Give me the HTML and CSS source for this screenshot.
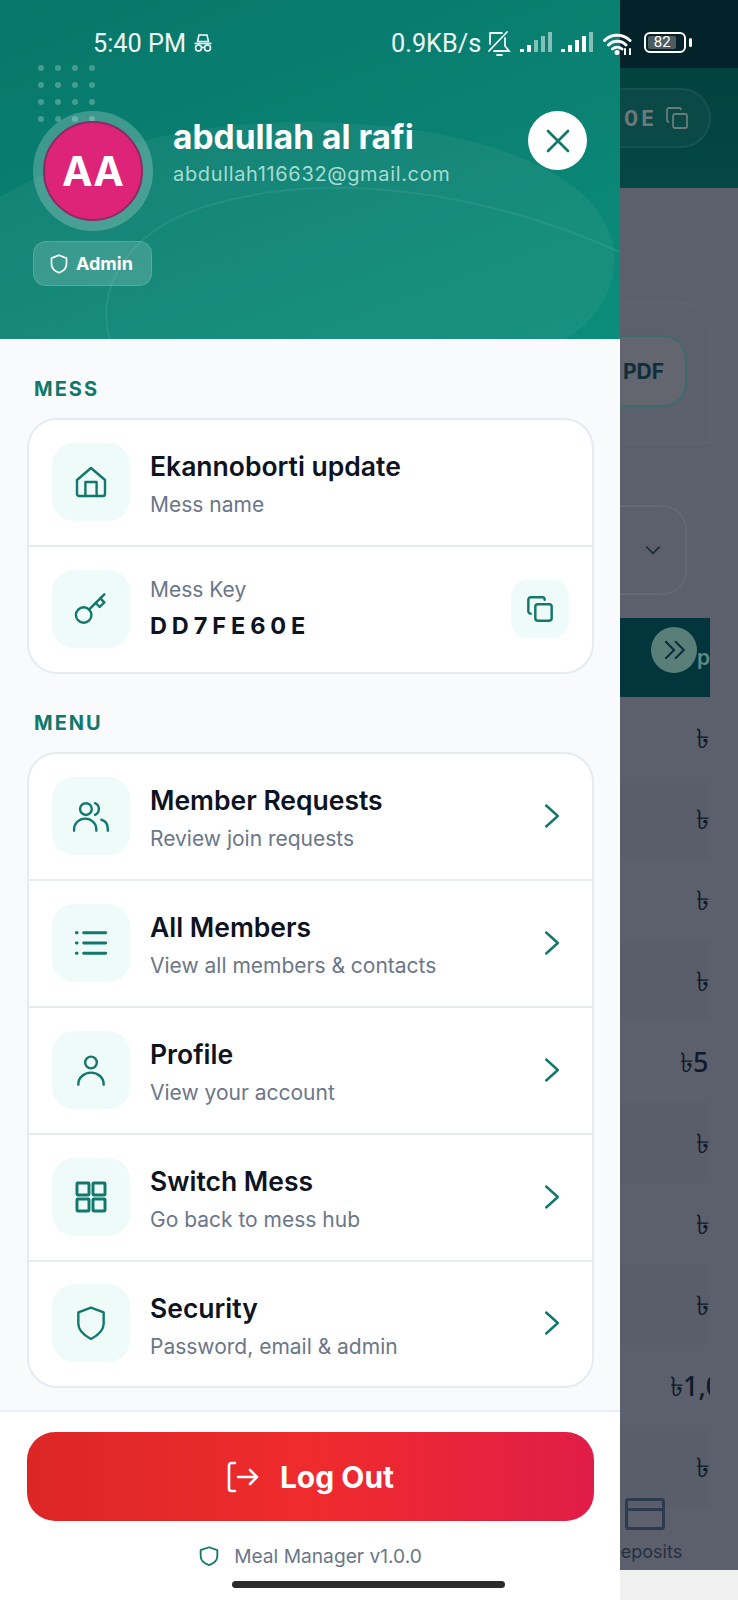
FILE: index.html
```html
<!DOCTYPE html>
<html>
  <head>
    <title>Meal Manager</title>
    <link rel="stylesheet" href="styles.css">
  </head>
  <body>
    <div class="screen">
      <!-- Drawer -->
      <aside class="drawer">
        <header class="drawer-head">
          <svg class="head-art" viewBox="0 0 620 339" width="620" height="339">
            <path d="M0 197C60 160 170 122 300 122C450 122 590 160 612 240C622 280 600 320 565 339H0Z" fill="#fff" fill-opacity=".05"/>
            <path d="M110 339C95 290 125 230 210 205C330 170 480 190 620 252" fill="none" stroke="#fff" stroke-opacity=".07" stroke-width="2"/>
            <g fill="#fff" fill-opacity=".25">
              <circle cx="41" cy="68" r="3"/><circle cx="58" cy="68" r="3"/><circle cx="75" cy="68" r="3"/><circle cx="92" cy="68" r="3"/>
              <circle cx="41" cy="85" r="3"/><circle cx="58" cy="85" r="3"/><circle cx="75" cy="85" r="3"/><circle cx="92" cy="85" r="3"/>
              <circle cx="41" cy="102" r="3"/><circle cx="58" cy="102" r="3"/><circle cx="75" cy="102" r="3"/><circle cx="92" cy="102" r="3"/>
              <circle cx="41" cy="119" r="3"/><circle cx="58" cy="119" r="3"/><circle cx="75" cy="119" r="3"/><circle cx="92" cy="119" r="3"/>
            </g>
          </svg>
          <div class="head-row">
            <div class="avatar-ring"><div class="avatar">AA</div></div>
            <div class="head-text">
              <div class="user-name">abdullah al rafi</div>
              <div class="user-mail">abdullah116632@gmail.com</div>
            </div>
            <button class="close-btn">
              <svg viewBox="0 0 24 24" width="32" height="32"><path d="M4.500 4.500l15 15M19.500 4.500l-15 15"/></svg>
            </button>
          </div>
          <div class="role-badge">
            <svg viewBox="0 0 24 24" width="20" height="22"><path d="M12 1.500l9 3.500v7c0 5-3.800 8.500-9 10.500c-5.200-2-9-5.500-9-10.500V5z"/></svg>
            Admin
          </div>
        </header>

        <main class="drawer-body">
          <div class="section-label">MESS</div>
          <section class="card">
            <div class="row">
              <div class="icon-box">
                <svg class="ico" viewBox="0 0 24 24"><path d="M1.500 10.500L12 1.500l10.500 9V21a1.500 1.500 0 0 1-1.500 1.500H3A1.500 1.500 0 0 1 1.500 21z"/><path d="M7.800 22.500V12h8.400v10.500"/></svg>
              </div>
              <div class="row-text">
                <div class="row-title">Ekannoborti update</div>
                <div class="row-sub">Mess name</div>
              </div>
            </div>
            <div class="row">
              <div class="icon-box">
                <svg class="ico" viewBox="0 0 24 24"><circle cx="6.500" cy="16.500" r="5.800"/><path d="M10.700 12.300L22 1"/><path d="M15.500 7.500l3 3 3.500-3.500-3-3"/></svg>
              </div>
              <div class="row-text key-text">
                <div class="row-sub">Mess Key</div>
                <div class="key-value">DD7FE60E</div>
              </div>
              <div class="copy-box">
                <svg class="ico ico-sm" viewBox="0 0 24 24"><rect x="8" y="8" width="14" height="14" rx="2"/><path d="M4 16a2 2 0 0 1-2-2V4a2 2 0 0 1 2-2h10a2 2 0 0 1 2 2"/></svg>
              </div>
            </div>
          </section>

          <div class="section-label menu-label">MENU</div>
          <section class="card menu-card">
            <div class="row">
              <div class="icon-box">
                <svg class="ico" viewBox="0 0 24 24"><circle cx="8.200" cy="6.800" r="4.400"/><path d="M15 2.400a4.800 4.800 0 0 1 0 8.800"/><path d="M-.7 23v-1a8.300 8 0 0 1 16.700 0v1"/><path d="M19.800 14.800c3 .8 4.800 3.500 4.800 7V23"/></svg>
              </div>
              <div class="row-text">
                <div class="row-title">Member Requests</div>
                <div class="row-sub">Review join requests</div>
              </div>
              <svg class="chev" viewBox="0 0 24 24"><path d="M7 3l10 9-10 9"/></svg>
            </div>
            <div class="row">
              <div class="icon-box">
                <svg class="ico" viewBox="0 0 24 24"><path class="thick" d="M6.500 4.300H23M6.500 12H23M6.500 19.700H23M1 4.300h.6M1 12h.6M1 19.700h.6"/></svg>
              </div>
              <div class="row-text">
                <div class="row-title">All Members</div>
                <div class="row-sub">View all members &amp; contacts</div>
              </div>
              <svg class="chev" viewBox="0 0 24 24"><path d="M7 3l10 9-10 9"/></svg>
            </div>
            <div class="row">
              <div class="icon-box">
                <svg class="ico" viewBox="0 0 24 24"><circle cx="12" cy="6.400" r="4.400"/><path d="M2.500 23v-.5a9.500 8.500 0 0 1 19 0v.5"/></svg>
              </div>
              <div class="row-text">
                <div class="row-title">Profile</div>
                <div class="row-sub">View your account</div>
              </div>
              <svg class="chev" viewBox="0 0 24 24"><path d="M7 3l10 9-10 9"/></svg>
            </div>
            <div class="row">
              <div class="icon-box">
                <svg class="ico" viewBox="0 0 24 24"><g class="thick"><rect x="1.500" y="1.500" width="9" height="9" rx=".5"/><rect x="13.500" y="1.500" width="9" height="9" rx=".5"/><rect x="1.500" y="13.500" width="9" height="9" rx=".5"/><rect x="13.500" y="13.500" width="9" height="9" rx=".5"/></g></svg>
              </div>
              <div class="row-text">
                <div class="row-title">Switch Mess</div>
                <div class="row-sub">Go back to mess hub</div>
              </div>
              <svg class="chev" viewBox="0 0 24 24"><path d="M7 3l10 9-10 9"/></svg>
            </div>
            <div class="row">
              <div class="icon-box">
                <svg class="ico" viewBox="0 0 24 24"><path d="M12 .5l9.500 3.500v8.500c0 5-4 8.500-9.500 11.500c-5.500-3-9.500-6.500-9.500-11.500V4z"/></svg>
              </div>
              <div class="row-text">
                <div class="row-title">Security</div>
                <div class="row-sub">Password, email &amp; admin</div>
              </div>
              <svg class="chev" viewBox="0 0 24 24"><path d="M7 3l10 9-10 9"/></svg>
            </div>
          </section>
        </main>

        <footer class="drawer-foot">
          <button class="logout-btn">
            <svg viewBox="0 0 32 32" width="32" height="32"><path d="M8 2H4.500A2.500 2.500 0 0 0 2 4.500v23A2.500 2.500 0 0 0 4.500 30H8"/><path d="M11 16h19M23 9l7 7-7 7"/></svg>
            <span>Log Out</span>
          </button>
          <div class="version">
            <svg viewBox="0 0 24 24" width="20" height="24"><path d="M12 1.500l10 3.500v7c0 5.500-4.500 9-10 11c-5.500-2-10-5.500-10-11V5z"/></svg>
            Meal Manager v1.0.0
          </div>
        </footer>
      </aside>

      <!-- Page dimmed behind the drawer -->
      <div class="backdrop">
        <div class="bd-status"></div>
        <div class="bd-appbar">
          <div class="bd-pill">
            <span>0E</span>
            <svg viewBox="0 0 24 24" width="24" height="24"><rect x="8" y="8" width="14" height="14" rx="2"/><path d="M4 16a2 2 0 0 1-2-2V4a2 2 0 0 1 2-2h10a2 2 0 0 1 2 2"/></svg>
          </div>
        </div>
        <div class="bd-card">
          <div class="bd-pdf">PDF</div>
        </div>
        <div class="bd-select">
          <svg viewBox="0 0 24 24" width="20" height="20"><path d="M4 8l8 8 8-8"/></svg>
        </div>
        <div class="bd-table">
          <div class="bd-thead">
            <div class="bd-skip">
              <svg viewBox="0 0 24 24" width="26" height="26"><path d="M4 4l8 8-8 8M13 4l8 8-8 8"/></svg>
            </div>
            <span class="bd-th">p</span>
          </div>
          <div class="bd-tr">৳</div>
          <div class="bd-tr alt">৳</div>
          <div class="bd-tr">৳</div>
          <div class="bd-tr alt">৳</div>
          <div class="bd-tr amt-mid">৳5</div>
          <div class="bd-tr alt">৳</div>
          <div class="bd-tr">৳</div>
          <div class="bd-tr alt">৳</div>
          <div class="bd-tr amt-wide">৳1,0</div>
          <div class="bd-tr alt">৳</div>
        </div>
        <div class="bd-nav">
          <svg viewBox="0 0 40 32" width="40" height="32"><rect x="1.500" y="1.500" width="37" height="29" rx="2"/><path d="M1.500 11.500h37"/></svg>
          <span>Deposits</span>
        </div>
        <div class="bd-bottom"></div>
      </div>

      <!-- Phone status bar, sits over both -->
      <div class="statusbar">
        <span class="clock">5:40 PM</span>
        <svg class="st-spy" viewBox="0 0 18 18" width="18" height="18"><path d="M5 1h8l1.500 6.500h-11zM0.500 9.500h17"/><circle cx="4.500" cy="14" r="3"/><circle cx="13.500" cy="14" r="3"/><path d="M7.500 13.500h3"/></svg>
        <span class="speed">0.9KB/s</span>
        <svg class="st-bell" viewBox="0 0 24 26" width="24" height="26"><path d="M3 3v11M3 3h12M2 21L20 2M18 8v8l4 5H7M10 25h5"/></svg>
        <svg class="st-sig" viewBox="0 0 33 20" width="33" height="20"><rect x="0" y="17" width="4" height="3"/><rect x="7" y="13" width="4" height="7"/><rect x="14" y="8" width="4" height="12" fill-opacity=".5"/><rect x="21" y="4" width="4" height="16" fill-opacity=".5"/><rect x="28" y="0" width="4" height="20" fill-opacity=".5"/></svg>
        <svg class="st-sig st-sig2" viewBox="0 0 33 20" width="33" height="20"><rect x="0" y="17" width="4" height="3"/><rect x="7" y="13" width="4" height="7"/><rect x="14" y="8" width="4" height="12"/><rect x="21" y="4" width="4" height="16"/><rect x="28" y="0" width="4" height="20" fill-opacity=".5"/></svg>
        <svg class="st-wifi" viewBox="0 0 30 23" width="30" height="23"><path d="M1.500 8.500C8 1.500 20 1.500 27 8.500M5.500 13C10 8 18.500 8 23 13M9.500 17c2.800-2.500 6.800-2.500 9.500 0"/><circle cx="14" cy="20.500" r="2.500" fill="#fff" stroke="none"/><path class="st-arrows" d="M22 17v6M27 17v6"/></svg>
        <div class="battery"><span>82</span></div>
        <div class="battery-tip"></div>
      </div>
      <div class="home-bar"></div>
    </div>
  </body>
</html>
```

FILE: styles.css
```css
* {
  box-sizing: border-box;
}
body {
  margin: 0;
  font-family: Inter, "Noto Sans", sans-serif;
  background: #f0f0f0;
}
.screen {
  position: relative;
  display: flex;
  width: 738px;
  height: 1600px;
  overflow: hidden;
}

/* drawer */
.drawer {
  display: flex;
  flex-direction: column;
  width: 620px;
  flex: none;
  background: #f8fafc;
}
.drawer-head {
  position: relative;
  height: 339px;
  padding: 111px 33px 0 33px;
  background: linear-gradient(160deg, #06776a 0%, #0a8273 55%, #0b8d7b 100%);
}
.head-art {
  position: absolute;
  top: 0;
  left: 0;
}
.head-row {
  position: relative;
  display: flex;
  align-items: flex-start;
}
.avatar-ring {
  width: 120px;
  height: 120px;
  flex: none;
  padding: 10px;
  border-radius: 50%;
  background: rgba(255, 255, 255, 0.22);
}
.avatar {
  display: flex;
  align-items: center;
  justify-content: center;
  height: 100%;
  border: 2px solid #8a2a66;
  border-radius: 50%;
  background: #dd2478;
  color: #fff;
  font-size: 41px;
  font-weight: 700;
}
.head-text {
  flex: 1;
  padding: 7px 0 0 20px;
}
.user-name {
  color: #fff;
  font-size: 33.5px;
  line-height: 38px;
  font-weight: 700;
}
.user-mail {
  margin-top: 6px;
  color: #a6dcd2;
  font-size: 20px;
  line-height: 24px;
  letter-spacing: 0.65px;
}
.close-btn {
  display: flex;
  align-items: center;
  justify-content: center;
  width: 59px;
  height: 59px;
  padding: 0;
  border: none;
  border-radius: 50%;
  background: #fff;
}
.close-btn path {
  fill: none;
  stroke: #11786b;
  stroke-width: 2;
  stroke-linecap: round;
}
.role-badge {
  position: relative;
  display: inline-flex;
  align-items: center;
  gap: 7px;
  height: 45px;
  width: 119px;
  margin-top: 10px;
  padding-left: 15px;
  border: 1px solid rgba(255, 255, 255, 0.14);
  border-radius: 13px;
  background: rgba(255, 255, 255, 0.16);
  color: #fff;
  font-size: 18px;
  font-weight: 700;
}
.role-badge path {
  fill: none;
  stroke: #fff;
  stroke-width: 2;
}
.drawer-body {
  flex: 1;
  padding: 36px 26px 0 27px;
}
.section-label {
  margin-left: 7px;
  height: 28px;
  color: #11786b;
  font-size: 20px;
  line-height: 28px;
  font-weight: 700;
  letter-spacing: 2px;
}
.menu-label {
  margin-top: 35px;
}
.card {
  margin-top: 15px;
  border: 2px solid #e6ebf1;
  border-radius: 30px;
  background: #fff;
  overflow: hidden;
}
.row {
  display: flex;
  align-items: center;
  height: 127px;
  padding: 0 23px 2px 23px;
  border-top: 2px solid #e6ebf1;
}
.row:first-child {
  height: 125px;
  border-top: none;
}
.menu-card .row:last-child {
  height: 126px;
}
.icon-box {
  display: flex;
  align-items: center;
  justify-content: center;
  width: 78px;
  height: 78px;
  flex: none;
  border-radius: 22px;
  background: #effbf9;
}
.ico {
  width: 32px;
  height: 32px;
  overflow: visible;
  fill: none;
  stroke: #11786b;
  stroke-width: 1.8;
  stroke-linecap: round;
  stroke-linejoin: round;
}
.ico-sm {
  width: 28px;
  height: 28px;
  stroke-width: 2.1;
}
.thick {
  stroke-width: 2.2;
}
.row-text {
  flex: 1;
  padding: 5px 0 0 20px;
}
.row-title {
  color: #0d1321;
  font-size: 26.5px;
  line-height: 34px;
  font-weight: 600;
}
.row-sub {
  margin-top: 8px;
  color: #6b7688;
  font-size: 21px;
  line-height: 28px;
}
.key-text {
  padding-top: 0;
}
.key-text .row-sub {
  margin-top: 0;
}
.key-value {
  margin-top: 7px;
  color: #0d1321;
  font-size: 23.5px;
  line-height: 30px;
  font-weight: 700;
  letter-spacing: 4.9px;
}
.copy-box {
  display: flex;
  align-items: center;
  justify-content: center;
  width: 58px;
  height: 58px;
  border-radius: 16px;
  background: #effbf9;
}
.chev {
  width: 28px;
  height: 28px;
  margin-right: 3px;
  fill: none;
  stroke: #11786b;
  stroke-width: 2.1;
  stroke-linecap: round;
  stroke-linejoin: round;
}
.drawer-foot {
  height: 190px;
  padding: 20px 26px 0 27px;
  border-top: 2px solid #e6ebf4;
  background: #fff;
}
.logout-btn {
  display: flex;
  align-items: center;
  justify-content: center;
  gap: 21px;
  width: 567px;
  height: 89px;
  padding: 0;
  border: none;
  border-radius: 28px;
  background: linear-gradient(90deg, #dc2626 0%, #ef2b2d 50%, #e11d48 100%);
  color: #fff;
  font-family: Inter, "Noto Sans", sans-serif;
  font-size: 30px;
  font-weight: 700;
}
.logout-btn path {
  fill: none;
  stroke: #fff;
  stroke-width: 2.6;
  stroke-linecap: round;
  stroke-linejoin: round;
}
.version {
  display: flex;
  align-items: center;
  justify-content: center;
  gap: 15px;
  margin-top: 21px;
  color: #6b7688;
  font-size: 19.2px;
  line-height: 28px;
}
.version path {
  fill: none;
  stroke: #11786b;
  stroke-width: 2.2;
  stroke-linejoin: round;
}

/* dimmed page */
.backdrop {
  display: flex;
  flex-direction: column;
  flex: 1;
  overflow: hidden;
  background: #5c5f6c;
  color: #0e2f3a;
}
.bd-status {
  height: 68px;
  background: #04222a;
}
.bd-appbar {
  display: flex;
  align-items: center;
  height: 120px;
  padding: 0 27px 20px 0;
  background: linear-gradient(180deg, #02423d 0%, #044744 100%);
}
.bd-pill {
  display: flex;
  align-items: center;
  gap: 8px;
  width: 100%;
  height: 60px;
  padding-left: 4px;
  border: 2px solid rgba(255, 255, 255, 0.05);
  border-left: none;
  border-radius: 0 30px 30px 0;
  background: rgba(255, 255, 255, 0.03);
  color: #6d7a7c;
  font-size: 21px;
  font-weight: 700;
  letter-spacing: 3px;
}
.bd-pill svg {
  fill: none;
  stroke: #6d7a7c;
  stroke-width: 1.8;
}
.bd-card {
  height: 142px;
  margin: 114px 27px 0 0;
  padding: 33px 22px 0 0;
  border: 2px solid #60636e;
  border-left: none;
  border-radius: 0 30px 0 0;
}
.bd-pdf {
  display: flex;
  align-items: center;
  height: 72px;
  margin-top: -2px;
  padding-left: 3px;
  border: 2px solid #3f6b6d;
  border-left: none;
  border-radius: 0 24px 24px 0;
  background: #63656f;
  color: #0e2f3a;
  font-size: 21px;
  font-weight: 700;
}
.bd-select {
  display: flex;
  align-items: center;
  justify-content: flex-end;
  height: 90px;
  margin: 61px 51px 0 0;
  padding-right: 22px;
  border: 2px solid #666975;
  border-left: none;
  border-radius: 0 24px 24px 0;
}
.bd-select path {
  fill: none;
  stroke: #1c2b38;
  stroke-width: 2;
}
.bd-table {
  width: 90px;
  margin-top: 23px;
  overflow: hidden;
}
.bd-thead {
  display: flex;
  align-items: center;
  height: 79px;
  padding-left: 31px;
  background: #02353c;
}
.bd-skip {
  display: flex;
  align-items: center;
  justify-content: center;
  width: 46px;
  height: 46px;
  flex: none;
  margin-top: -16px;
  border-radius: 50%;
  background: #5a7f78;
}
.bd-skip path {
  fill: none;
  stroke: #0e2f3a;
  stroke-width: 2;
}
.bd-th {
  color: #5f8a86;
  font-size: 21px;
  font-weight: 600;
}
.bd-tr {
  height: 81px;
  padding: 26px 0 0 76px;
  white-space: nowrap;
  color: #0e1a2b;
  font-family: "Noto Sans", "DejaVu Sans", sans-serif;
  font-size: 27px;
  font-weight: 500;
  line-height: 30px;
}
.bd-tr.alt {
  background: #5a5d6a;
}
.bd-tr.amt-mid {
  padding-left: 60px;
}
.bd-tr.amt-wide {
  padding-left: 50px;
}
.bd-nav {
  display: flex;
  flex-direction: column;
  align-items: center;
  gap: 10px;
  width: 100px;
  height: 72px;
  margin: -9px 0 0 -25px;
  color: #24303f;
  font-size: 18px;
  line-height: 24px;
}
.bd-nav svg {
  flex: none;
  fill: none;
  stroke: #2d3b50;
  stroke-width: 3;
}
.bd-bottom {
  flex: 1;
  background: #f0f0f0;
}

/* phone chrome */
.statusbar {
  position: absolute;
  top: 0;
  left: 0;
  display: flex;
  align-items: center;
  width: 738px;
  height: 86px;
  padding-left: 93px;
  color: #eef7f5;
  font-family: Roboto, sans-serif;
  font-size: 25.3px;
}
.clock {
  width: 101px;
}
.st-spy {
  fill: none;
  stroke: #fff;
  stroke-width: 1.5;
}
.speed {
  margin-left: 179px;
}
.st-bell {
  margin-left: 6px;
  fill: none;
  stroke: #eef7f5;
  stroke-width: 1.8;
  stroke-linecap: round;
}
.st-sig {
  margin: 0 0 2px 9px;
  fill: #fff;
}
.st-sig2 {
  margin-left: 8px;
}
.st-wifi {
  margin-left: 9px;
  fill: none;
  stroke: #fff;
  stroke-width: 3;
  stroke-linecap: round;
}
.st-arrows {
  stroke-width: 2;
}
.battery {
  display: flex;
  width: 42px;
  height: 21px;
  margin: 0 0 2px 11px;
  padding: 2px;
  border: 2px solid #fff;
  border-radius: 6px;
}
.battery span {
  width: 82%;
  border-radius: 2px;
  background: #4e5c60;
  text-align: center;
  color: #fff;
  font-size: 15px;
  line-height: 13px;
}
.battery-tip {
  width: 3px;
  height: 9px;
  margin: 0 0 2px 3px;
  border-radius: 2px;
  background: #fff;
}
.home-bar {
  position: absolute;
  top: 1581px;
  left: 232px;
  width: 273px;
  height: 7px;
  border-radius: 4px;
  background: #2b2b2b;
}
```
